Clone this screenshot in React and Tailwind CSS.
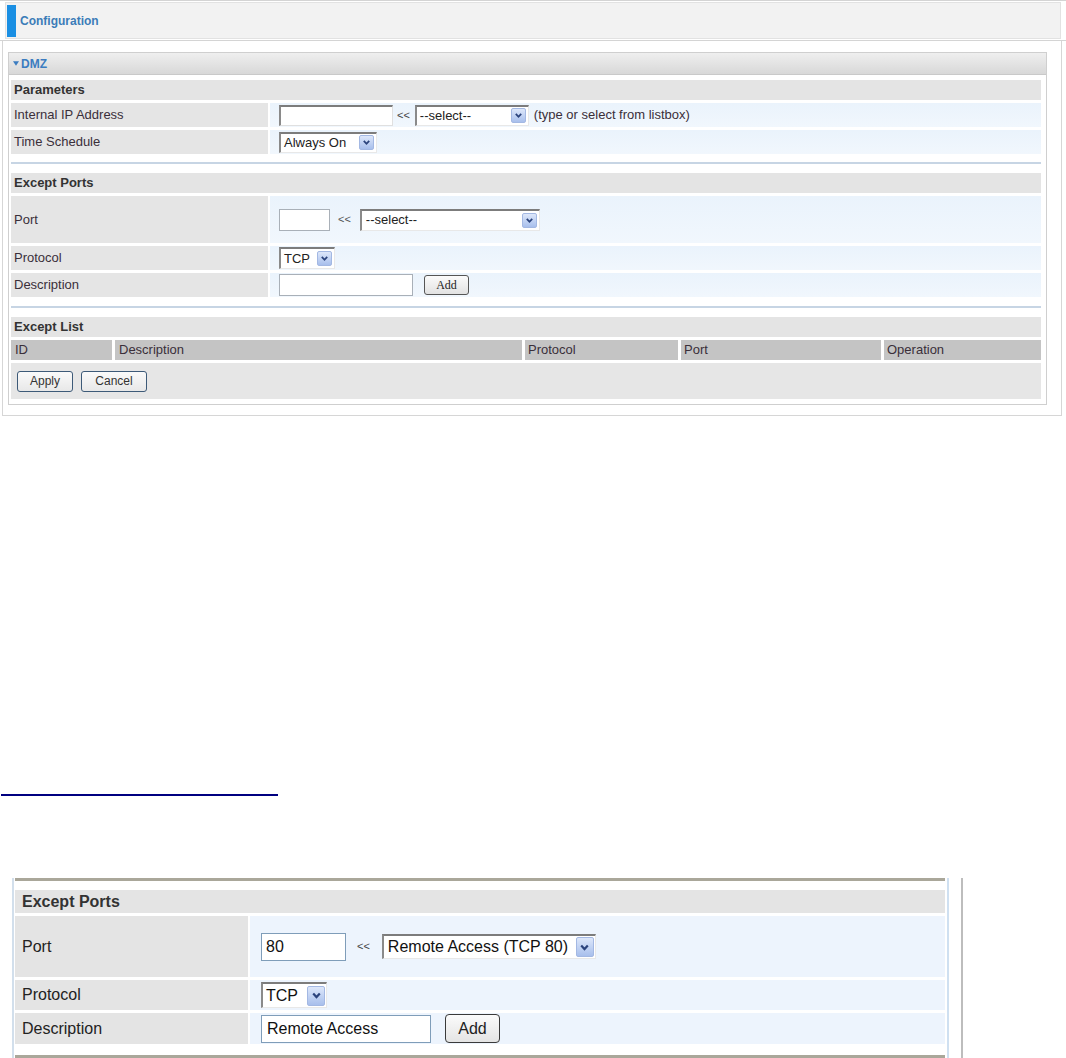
import React from "react";

function Arrow({ cls, icon }) {
  return (
    <span
      className={
        "flex items-center justify-center bg-gradient-to-b from-[#dde7fa] to-[#a8bfec] border border-[#a3b8e3] rounded-[2px] shrink-0 " +
        cls
      }
    >
      <svg viewBox="0 0 10 10" className={icon}>
        <path d="M2 3.2 L5 6.4 L8 3.2" fill="none" stroke="#2b437c" strokeWidth="2" />
      </svg>
    </span>
  );
}

function Sel({ box, text, textCls, arrowCls, icon }) {
  return (
    <div
      className={
        "flex items-center justify-between bg-white border-t-2 border-l-2 border-r border-b border-t-[#7c7c7c] border-l-[#8a8a8a] border-r-[#e8e8e8] border-b-[#e8e8e8] " +
        box
      }
    >
      <span className={textCls}>{text}</span>
      <Arrow cls={arrowCls} icon={icon} />
    </div>
  );
}

function Row({ label, h, children }) {
  return (
    <div className={"flex gap-[2px] " + h}>
      <div className="w-[257px] bg-[#e5e5e5] flex items-center pl-[3px] text-[13px] text-[#3a2f3a]">
        {label}
      </div>
      <div className="flex-1 bg-gradient-to-b from-[#eaf3fc] to-[#f1f7fd] flex items-center pl-[9px]">
        {children}
      </div>
    </div>
  );
}

function Head({ children }) {
  return (
    <div className="h-[20px] bg-[#e4e4e4] flex items-center pl-[3px] text-[13px] font-bold text-[#333]">
      {children}
    </div>
  );
}

function BRow({ label, h, children }) {
  return (
    <div className={"flex gap-[2px] " + h}>
      <div className="w-[233px] bg-[#e4e4e4] flex items-center pl-[7px] text-[16px] text-[#222]">
        {label}
      </div>
      <div className="flex-1 bg-[#edf4fd] flex items-center pl-[11px]">{children}</div>
    </div>
  );
}

export default function App() {
  return (
    <div className="relative w-[1066px] h-[1058px] bg-white overflow-hidden font-['Liberation_Sans',Arial,sans-serif] text-[#333]">
      {/* Configuration header */}
      <div className="h-[41px] border-t border-b border-[#d4d4d4] flex">
        <div className="ml-[5px] mt-[1px] w-[1056px] h-[37px] bg-[#f2f2f2] border border-[#e2e2e2] flex items-center">
          <div className="w-[9px] h-[32px] bg-[#1a8fe3] ml-[1px]" />
          <span className="ml-[4px] text-[12px] font-bold text-[#3b7cb8]">Configuration</span>
        </div>
      </div>

      {/* DMZ frame */}
      <div className="ml-[2px] w-[1060px] h-[375px] border-x border-b border-[#d6d6d6] pt-[11px] pl-[5px]">
        <div className="w-[1039px] border border-[#cfcfcf] bg-white">
          <div className="h-[22px] bg-gradient-to-b from-[#efefef] to-[#d8d8d8] border-b border-[#c9c9c9] flex items-center pl-[4px]">
            <svg viewBox="0 0 8 6" className="w-[6px] h-[5px]">
              <path d="M0 0 L8 0 L4 6 Z" fill="#3b7cc0" />
            </svg>
            <span className="ml-[2px] text-[12px] font-bold text-[#3b7cc0]">DMZ</span>
          </div>
          <div className="pt-[5px] pl-[2px] pr-[5px] pb-[5px] flex flex-col">
            <div className="flex flex-col gap-[3px]">
              <Head>Parameters</Head>
              <Row label="Internal IP Address" h="h-[24px]">
                <div className="w-[114px] h-[21px] bg-white border-t-2 border-l-2 border-r border-b border-t-[#7c7c7c] border-l-[#8a8a8a] border-r-[#e0e0e0] border-b-[#e0e0e0]" />
                <span className="ml-[4px] text-[11px] text-[#444]">&lt;&lt;</span>
                <Sel
                  box="ml-[5px] w-[114px] h-[21px] pr-[2px]"
                  text="--select--"
                  textCls="pl-[3px] text-[13px] text-[#222]"
                  arrowCls="w-[15px] h-[15px]"
                  icon="w-[9px] h-[9px]"
                />
                <span className="ml-[5px] text-[13px] text-[#3a2f3a]">(type or select from listbox)</span>
              </Row>
              <Row label="Time Schedule" h="h-[24px]">
                <Sel
                  box="w-[98px] h-[21px] pr-[2px]"
                  text="Always On"
                  textCls="pl-[3px] text-[13px] text-[#222]"
                  arrowCls="w-[15px] h-[15px]"
                  icon="w-[9px] h-[9px]"
                />
              </Row>
            </div>

            <div className="mt-[8px] h-[2px] bg-[#c7d5e4]" />

            <div className="mt-[9px] flex flex-col gap-[3px]">
              <Head>Except Ports</Head>
              <Row label="Port" h="h-[47px]">
                <div className="w-[51px] h-[22px] bg-white border border-[#a9b0b8]" />
                <span className="ml-[8px] text-[11px] text-[#555]">&lt;&lt;</span>
                <Sel
                  box="ml-[9px] w-[180px] h-[22px] pr-[2px]"
                  text="--select--"
                  textCls="pl-[4px] text-[13px] text-[#222]"
                  arrowCls="w-[15px] h-[15px]"
                  icon="w-[9px] h-[9px]"
                />
              </Row>
              <Row label="Protocol" h="h-[24px]">
                <Sel
                  box="w-[56px] h-[22px] pr-[2px]"
                  text="TCP"
                  textCls="pl-[3px] text-[13px] text-[#222]"
                  arrowCls="w-[15px] h-[15px]"
                  icon="w-[9px] h-[9px]"
                />
              </Row>
              <Row label="Description" h="h-[24px]">
                <div className="w-[134px] h-[22px] bg-white border border-[#a9b0b8]" />
                <button className="ml-[11px] w-[45px] h-[20px] rounded-[3px] border border-[#555] bg-gradient-to-b from-[#fbfbfb] to-[#e2e2e2] text-[12px] text-[#222] font-['Liberation_Serif',serif] flex items-center justify-center">
                  Add
                </button>
              </Row>
            </div>

            <div className="mt-[9px] h-[2px] bg-[#c7d5e4]" />

            <div className="mt-[9px] flex flex-col gap-[3px]">
              <Head>Except List</Head>
              <div className="flex gap-[3px] h-[20px] text-[13px] text-[#3a2f3a]">
                <div className="w-[101px] bg-[#c4c4c4] flex items-center pl-[4px]">ID</div>
                <div className="w-[407px] bg-[#c4c4c4] flex items-center pl-[4px]">Description</div>
                <div className="w-[153px] bg-[#c4c4c4] flex items-center pl-[3px]">Protocol</div>
                <div className="w-[200px] bg-[#c4c4c4] flex items-center pl-[3px]">Port</div>
                <div className="w-[157px] bg-[#c4c4c4] flex items-center pl-[3px]">Operation</div>
              </div>
              <div className="h-[36px] bg-[#e6e6e6] flex items-center pl-[6px] gap-[8px]">
                <button className="w-[56px] h-[21px] rounded-[3px] border border-[#3d5a78] bg-gradient-to-b from-[#fafafa] to-[#e8e8e8] text-[12px] text-[#333] flex items-center justify-center">
                  Apply
                </button>
                <button className="w-[66px] h-[21px] rounded-[3px] border border-[#3d5a78] bg-gradient-to-b from-[#fafafa] to-[#e8e8e8] text-[12px] text-[#333] flex items-center justify-center">
                  Cancel
                </button>
              </div>
            </div>
          </div>
        </div>
      </div>

      {/* Navy separator line */}
      <div className="mt-[378px] ml-[1px] w-[277px] h-[2px] bg-[#000080]" />

      {/* Second screenshot */}
      <div className="mt-[82px] ml-[12px] flex h-[180px]">
        <div className="w-[2px] bg-[#d2dfec]" />
        <div className="ml-[1px] w-[930px] flex flex-col">
          <div className="h-[3px] bg-[#aaa79a]" />
          <div className="mt-[9px] h-[23px] bg-[#e4e4e4] flex items-center pl-[7px] text-[16px] font-bold text-[#333]">
            Except Ports
          </div>
          <div className="mt-[3px] flex flex-col gap-[3px]">
            <BRow label="Port" h="h-[61px]">
              <div className="w-[85px] h-[28px] bg-white border border-[#7f9db9] flex items-center pl-[4px] text-[16px] text-[#111]">
                80
              </div>
              <span className="ml-[11px] text-[11px] text-[#444]">&lt;&lt;</span>
              <Sel
                box="ml-[12px] w-[214px] h-[25px] pr-[1px]"
                text="Remote Access (TCP 80)"
                textCls="pl-[4px] text-[16px] text-[#111]"
                arrowCls="w-[18px] h-[20px]"
                icon="w-[11px] h-[11px]"
              />
            </BRow>
            <BRow label="Protocol" h="h-[30px]">
              <Sel
                box="w-[66px] h-[26px] pr-[1px]"
                text="TCP"
                textCls="pl-[3px] text-[16px] text-[#111]"
                arrowCls="w-[18px] h-[20px]"
                icon="w-[11px] h-[11px]"
              />
            </BRow>
            <BRow label="Description" h="h-[31px]">
              <div className="w-[170px] h-[28px] bg-white border border-[#7f9db9] flex items-center pl-[5px] text-[16px] text-[#111]">
                Remote Access
              </div>
              <button className="ml-[14px] w-[55px] h-[29px] rounded-[4px] border border-[#3a3a3a] bg-gradient-to-b from-[#fbfbfb] to-[#e4e4e4] text-[16px] text-[#222] flex items-center justify-center">
                Add
              </button>
            </BRow>
          </div>
          <div className="mt-[11px] h-[3px] bg-[#aaa79a]" />
        </div>
        <div className="ml-[2px] w-[2px] bg-[#cfe0f1]" />
        <div className="ml-[12px] w-[2px] bg-[#bdbdbd]" />
      </div>
    </div>
  );
}
